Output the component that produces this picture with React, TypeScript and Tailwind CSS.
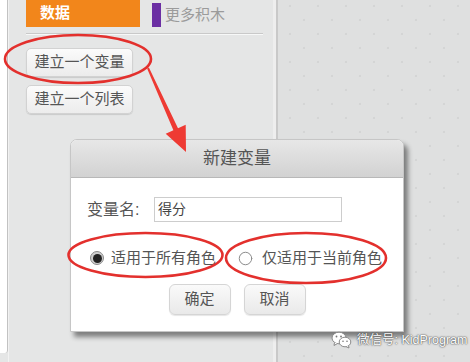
import { Circle } from "lucide-react"

const font = "font-['Liberation_Sans','Noto_Sans_CJK_SC',sans-serif]"

function PaletteButton({ label }: { label: string }) {
  return (
    <div className="flex h-[29px] w-[107px] items-center justify-center rounded-[5px] border border-[#d2d2d2] bg-gradient-to-b from-[#fbfbfb] to-[#ececec] text-[15px] text-[#555] shadow-[0_1px_1px_rgba(0,0,0,0.12)]">
      {label}
    </div>
  )
}

function Radio({ checked }: { checked?: boolean }) {
  if (checked) {
    return (
      <span className="flex size-[14px] items-center justify-center rounded-full border border-[#8a8a8a] bg-[#cfcfcf]">
        <span className="size-[9px] rounded-full bg-[#222]" />
      </span>
    )
  }
  return <Circle className="size-[15px] text-[#8c8c8c]" strokeWidth={1.6} />
}

function DialogButton({ label }: { label: string }) {
  return (
    <div className="flex h-[31px] w-[62px] items-center justify-center rounded-[6px] border border-[#d5d5d5] bg-gradient-to-b from-[#fafafa] to-[#e9e9e9] text-[15px] text-[#555] shadow-[0_1px_1px_rgba(0,0,0,0.1)]">
      {label}
    </div>
  )
}

function NewVariableDialog() {
  return (
    <div className="absolute left-[70px] top-[139px] flex h-[193px] w-[334px] flex-col rounded-t-[7px] border border-[#c6c6c6] bg-white shadow-[4px_5px_5px_rgba(0,0,0,0.45)]">
      <div className="flex h-[38px] items-center justify-center rounded-t-[6px] border-b border-[#b8b8b8] bg-gradient-to-b from-[#e7e7e7] to-[#d2d2d2] text-[17px] text-[#555]">
        新建变量
      </div>
      <div className="mt-[19px] flex items-center pl-[16px]">
        <span className="w-[67px] text-[16px] text-[#555]">变量名:</span>
        <div className="flex h-[25px] w-[188px] items-center border border-[#cdcdcd] px-[3px] text-[14px] text-[#444]">
          得分
        </div>
      </div>
      <div className="mt-[25px] flex items-center pl-[19px] text-[15px] text-[#555]">
        <Radio checked />
        <span className="ml-[7px]">适用于所有角色</span>
        <span className="ml-[22px]">
          <Radio />
        </span>
        <span className="ml-[9px]">仅适用于当前角色</span>
      </div>
      <div className="mt-[14px] flex justify-center gap-[13px]">
        <DialogButton label="确定" />
        <DialogButton label="取消" />
      </div>
    </div>
  )
}

function Annotations() {
  return (
    <svg className="pointer-events-none absolute inset-0" width="470" height="362" viewBox="0 0 470 362">
      <g fill="none" stroke="#e3302d" strokeWidth="2.6">
        <ellipse cx="78" cy="59" rx="73" ry="24" />
        <ellipse cx="145.5" cy="255" rx="77" ry="22" />
        <ellipse cx="306" cy="258" rx="80" ry="25" />
      </g>
      <polygon
        fill="#ee3a33"
        points="148.9,67.6 178,128.2 185.7,124.7 186,152 165.7,133.7 173.4,130.2 147.1,68.4"
      />
    </svg>
  )
}

function WeChatMark() {
  return (
    <div className="absolute left-[331px] top-[331px] flex items-center gap-[5px]">
      <svg width="21" height="18" viewBox="0 0 21 18">
        <ellipse cx="8" cy="7" rx="7" ry="5.8" fill="#fff" stroke="#8a8a8a" strokeWidth="1" />
        <path d="M3.5 11.5 L3 14.5 L6.5 12.5" fill="#fff" stroke="#8a8a8a" strokeWidth="1" />
        <ellipse cx="14" cy="11" rx="5.8" ry="4.8" fill="#fff" stroke="#8a8a8a" strokeWidth="1" />
        <path d="M17.5 14.5 L18 17 L15 15.6" fill="#fff" stroke="#8a8a8a" strokeWidth="1" />
        <circle cx="5.5" cy="5.5" r="0.9" fill="#777" />
        <circle cx="10" cy="5.5" r="0.9" fill="#777" />
        <circle cx="12" cy="10.3" r="0.8" fill="#777" />
        <circle cx="16" cy="10.3" r="0.8" fill="#777" />
      </svg>
      <span className="text-[12.5px] text-white [text-shadow:0_0_2px_#444,0_0_1px_#444]">微信号: KidProgram</span>
    </div>
  )
}

export default function App() {
  return (
    <div className={`relative flex h-[362px] w-[470px] overflow-hidden bg-[#e5e6e6] ${font}`}>
      {/* sprite list edge */}
      <div className="flex w-[8px] flex-col">
        <div className="h-[353px] rounded-br-[3px] border-r border-[#c2c2c2] bg-white" />
      </div>

      {/* blocks palette */}
      <div className="flex w-[265px] flex-col border-l border-[#f2f2f2] bg-[#e5e6e6] pl-[17px]">
        <div className="flex h-[27px] items-stretch">
          <div className="flex w-[114px] items-center bg-[#f2861b] pl-[14px] text-[15px] font-bold text-white">
            数据
          </div>
          <div className="ml-[12px] mt-[3px] w-[9px] bg-[#6b2fa3]" />
          <div className="ml-[4px] flex items-center pt-[3px] text-[15px] text-[#9b9b9b]">更多积木</div>
        </div>
        <div className="mt-[6px] h-[2px] w-[237px] border-t border-[#c9c9c9] bg-white/70" />
        <div className="mt-[13px] flex flex-col gap-[8px]">
          <PaletteButton label="建立一个变量" />
          <PaletteButton label="建立一个列表" />
        </div>
      </div>

      {/* divider */}
      <div className="w-[5px] border-r-2 border-[#c9c9c9] bg-[#eeeeee]" />

      {/* scripts area */}
      <div className="flex-1 bg-[#dfe0e0] bg-[radial-gradient(circle,#d4d5d5_1px,transparent_1.6px),radial-gradient(circle,#d4d5d5_1px,transparent_1.6px)] bg-[length:28px_28px] bg-[position:12px_6px,26px_20px]" />

      <NewVariableDialog />
      <Annotations />
      <WeChatMark />
    </div>
  )
}
